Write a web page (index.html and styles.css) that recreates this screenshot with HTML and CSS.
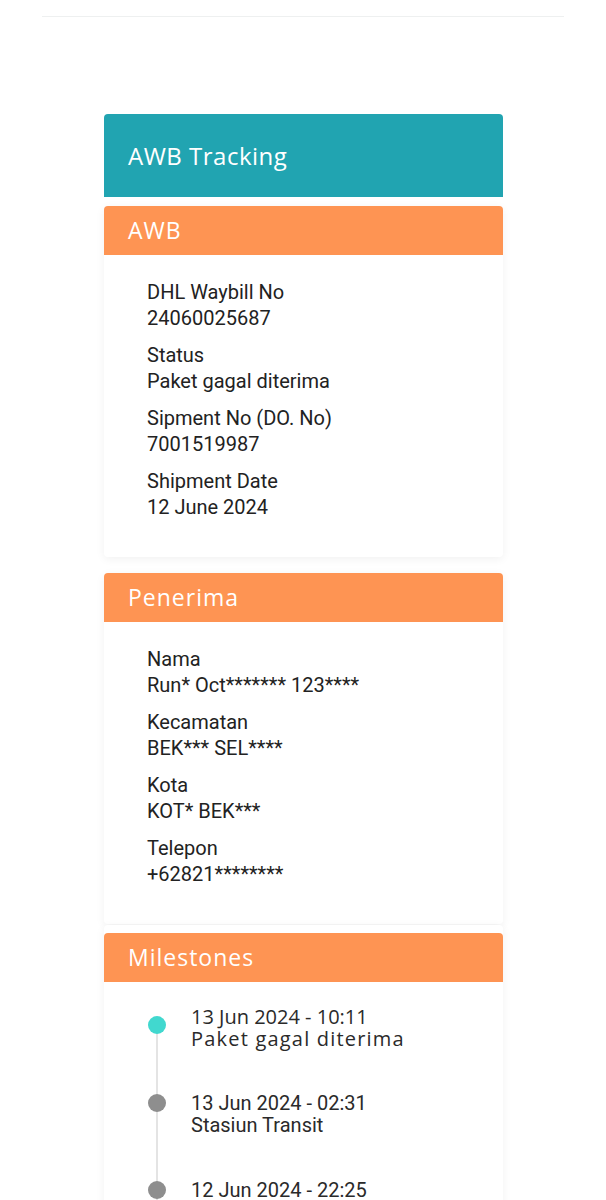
FILE: index.html
```html
<!DOCTYPE html>
<html lang="id">
<head>
    <meta charset="UTF-8">
    <meta name="viewport" content="width=device-width, initial-scale=1.0">
    <title>AWB Tracking</title>
    <link rel="stylesheet" href="styles.css">
</head>
<body>
    <div class="topbar"></div>
    <div class="container">
        <div class="page-title">AWB Tracking</div>

        <div class="card first">
            <div class="card-header">AWB</div>
            <div class="card-body">
                <div class="field">
                    <div>DHL Waybill No</div>
                    <div>24060025687</div>
                </div>
                <div class="field">
                    <div>Status</div>
                    <div>Paket gagal diterima</div>
                </div>
                <div class="field">
                    <div>Sipment No (DO. No)</div>
                    <div>7001519987</div>
                </div>
                <div class="field">
                    <div>Shipment Date</div>
                    <div>12 June 2024</div>
                </div>
            </div>
        </div>

        <div class="card">
            <div class="card-header">Penerima</div>
            <div class="card-body">
                <div class="field">
                    <div>Nama</div>
                    <div>Run* Oct******* 123****</div>
                </div>
                <div class="field">
                    <div>Kecamatan</div>
                    <div>BEK*** SEL****</div>
                </div>
                <div class="field">
                    <div>Kota</div>
                    <div>KOT* BEK***</div>
                </div>
                <div class="field">
                    <div>Telepon</div>
                    <div>+62821********</div>
                </div>
            </div>
        </div>

        <div class="card milestones">
            <div class="card-header">Milestones</div>
            <div class="card-body timeline">
                <div class="milestone current">
                    <span class="dot"></span>
                    <div class="when">13 Jun 2024 - 10:11</div>
                    <div class="what">Paket gagal diterima</div>
                </div>
                <div class="milestone">
                    <span class="dot"></span>
                    <div class="when">13 Jun 2024 - 02:31</div>
                    <div class="what">Stasiun Transit</div>
                </div>
                <div class="milestone">
                    <span class="dot"></span>
                    <div class="when">12 Jun 2024 - 22:25</div>
                    <div class="what">Stasiun Transit</div>
                </div>
            </div>
        </div>
    </div>
</body>
</html>
```

FILE: styles.css
```css
body {
    margin: 0;
    font-family: Roboto, 'Liberation Sans', sans-serif;
    background: #fff;
    color: #222;
}

.topbar {
    margin: 0 42px;
    height: 16px;
    border-bottom: 1px solid #eef0f0;
}

.container {
    width: 399px;
    margin: 97px 0 0 104px;
}

.page-title {
    background: #21a4b1;
    color: #fff;
    font-family: 'Open Sans', sans-serif;
    font-size: 24px;
    letter-spacing: 0.5px;
    height: 83px;
    line-height: 83px;
    padding-left: 24px;
    border-radius: 4px 4px 0 0;
}

.card {
    margin-top: 16px;
    border-radius: 4px;
    background: #fff;
    box-shadow: 0 2px 10px rgba(0, 0, 0, 0.06);
}

.card.first {
    margin-top: 9px;
}

.card.milestones {
    margin-top: 1px;
    padding-top: 8px;
}

.card-header {
    background: #fe9453;
    color: #fff;
    font-family: 'Open Sans', sans-serif;
    font-size: 23px;
    letter-spacing: 1px;
    height: 49px;
    line-height: 49px;
    padding-left: 24px;
    border-radius: 4px 4px 0 0;
}

.card-body {
    padding: 24px 24px 26px 43px;
    font-size: 20px;
    line-height: 26px;
}

.field {
    margin-bottom: 11px;
}

.timeline {
    position: relative;
    padding: 24px 24px 0 87px;
}

.timeline::before {
    content: "";
    position: absolute;
    left: 52px;
    top: 40px;
    bottom: 0;
    width: 2px;
    background: #e4e4e4;
}

.milestone {
    position: relative;
    min-height: 87px;
    font-size: 20px;
    line-height: 22px;
    color: #2a2a2a;
}

.milestone .dot {
    position: absolute;
    left: -43px;
    top: 2px;
    width: 18px;
    height: 18px;
    border-radius: 50%;
    background: #8e8e8e;
}

.milestone.current {
    font-family: 'Open Sans', sans-serif;
    min-height: 86px;
}

.milestone.current .what {
    letter-spacing: 1.2px;
}

.milestone.current .dot {
    background: #41d8cf;
    top: 10px;
}
```
